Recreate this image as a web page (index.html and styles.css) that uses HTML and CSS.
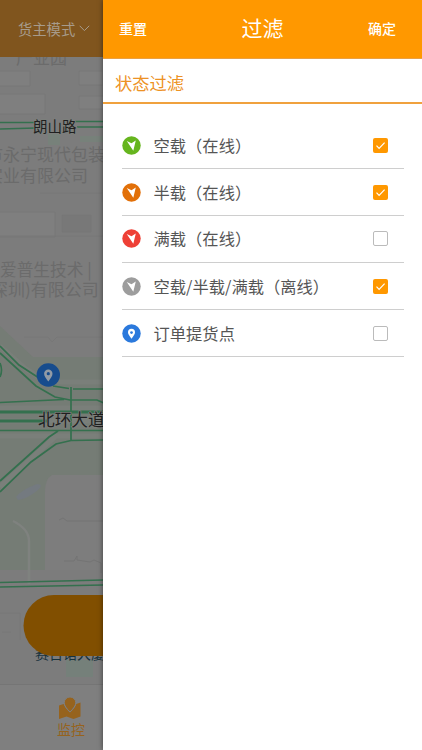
FILE: index.html
```
<!DOCTYPE html>
<html lang="zh-CN">
<head>
<meta charset="utf-8">
<title>过滤</title>
<link rel="stylesheet" href="styles.css">
</head>
<body>
<div class="screen">
  <section class="backdrop">
    <header class="mode">货主模式
      <svg width="11" height="7" viewBox="0 0 11 7"><path d="M.7.8l4.7 4.8L10.2.8" fill="none" stroke="#a79b8b"/></svg>
    </header>
    <svg class="map" width="104" height="627" viewBox="0 57 104 627">
      <rect y="57" width="104" height="627" fill="#7c7c7c"/>
      <g fill="#7f7f7f" stroke="#767676" stroke-width=".8">
        <path d="M-2 71H30V86H-2zM-2 94H45V114H-2zM79 71h24v14H79zM79 96h25v13H79zM-2 212H55V237H-2z"/>
        <path d="M62 215h29v17H62z" fill="#787878"/>
        <path d="M40 193h62M102 190v12M24 337h24l4 5 5-5h46M0 236h104M-1 613H20V640M2 632h9" fill="none"/>
      </g>
      <path d="M48 134h12v11H48zM80 136h24v6H80z" fill="#77817a"/>
      <path d="M0 326L33 357H104V475H60Q47 476 45 492V570H0z" fill="#757c75"/>
      <path d="M52 475H104V570H45V492Q45 479 52 475z" fill="#7d7d7d"/>
      <path d="M0 346L26 369 47 382H104M0 408H104M0 421H104M0 436H104M0 487L55 437" fill="none" stroke="#7a7f7a" stroke-width="5"/>
      <path d="M16 497Q21 490 37 484Q44 484 38 490Q27 499 18 500z" fill="#747a80"/>
      <path d="M13 521Q29 529 29 541V584" fill="none" stroke="#7f827f" stroke-width="2.500"/>
      <g fill="none" stroke="#747474"><path d="M59 520l4-2 4 3h36M64 561h10l3-5v4l13 2 4-2 7 3v10"/></g>
      <g fill="none" stroke="#34704e" stroke-width="1.700">
        <path d="M0 122.500h36M0 129l36-1M75 121.500h29M77 127h27"/>
        <path d="M0 346L19 365 39 378M0 353L36 386 55 397 70 400H97L104 403M53 386L69 388.500M73 389H104M0 402.500L64 399.500M0 430.500H104M0 481L49 437 58 431M0 492L31 462 56 444 71 440.500 104 440M71 387V440M0 363Q3 370 0 377"/>
        <path d="M0 412H104M0 421H47" stroke-width="3"/>
        <path d="M0 582.500L104 580M0 587L104 585"/>
      </g>
      <g class="map-faint">
        <text x="16" y="64" font-size="17">产业园</text>
        <text x="-14" y="161" font-size="17">市永宁现代包装</text>
        <text x="-14" y="182" font-size="17">实业有限公司</text>
        <text x="0" y="276" font-size="16.700">爱普生技术 |</text>
        <text x="-9" y="296" font-size="17">深圳)有限公司</text>
      </g>
      <g class="map-label">
        <text x="33" y="131.500" font-size="14.500">朗山路</text>
        <text x="38" y="425.500" font-size="16.700">北环大道</text>
      </g>
      <path d="M66 660h27v17H66z" fill="#75807a"/>
      <text class="landmark" x="35" y="659" font-size="14">赛百诺大厦</text>
      <circle cx="48.300" cy="375" r="11.700" fill="#174c8d"/>
      <path d="M48.300 381.500c-2.400-3.400-4.200-5.400-4.200-7.800a4.200 4.200 0 0 1 8.400 0c0 2.400-1.800 4.400-4.200 7.800z" fill="#929ba5"/><circle cx="48.300" cy="373.700" r="1.600" fill="#174c8d"/>
      <path d="M104 595H54a30.300 30.300 0 0 0 0 61H104z" fill="#814f00"/>
    </svg>
    <footer class="tab">
      <svg width="22" height="22" viewBox="0 0 22 22"><path d="M0 8.500L4.600 7Q6 11 11 15.500 16 11 17.300 7L21.500 5.500V19.500L14.500 22 7.500 19.500 0 22z" fill="#96631e"/><path d="M11 15C7.500 11.500 5.200 8.500 5.200 5.800a5.800 5.800 0 0 1 11.600 0C16.800 8.500 14.500 11.500 11 15z" fill="#96631e" stroke="#7f7f7f" stroke-width="1"/></svg>
      <span>监控</span>
    </footer>
  </section>
  <main class="drawer">
    <header class="drawer-head"><span>重置</span><h1>过滤</h1><span>确定</span></header>
    <h2>状态过滤</h2>
    <ul>
      <li><svg class="marker" viewBox="0 0 20 20"><circle cx="10" cy="10" r="9.700" fill="#66b51e"/><path d="M5 5.300l5 2.400L14.500 4.700l-2.600 10.800z" fill="#fff"/></svg><span>空载（在线）</span><i class="check on"><svg viewBox="0 0 15 15"><path d="M3.500 7.700l2.600 2.700 5.500-5.700"/></svg></i></li>
      <li><svg class="marker" viewBox="0 0 20 20"><circle cx="10" cy="10" r="9.700" fill="#e27009"/><path d="M5 5.300l5 2.400L14.500 4.700l-2.600 10.800z" fill="#fff"/></svg><span>半载（在线）</span><i class="check on"><svg viewBox="0 0 15 15"><path d="M3.500 7.700l2.600 2.700 5.500-5.700"/></svg></i></li>
      <li class="raised"><svg class="marker" viewBox="0 0 20 20"><circle cx="10" cy="10" r="9.700" fill="#ee4036"/><path d="M5 5.300l5 2.400L14.500 4.700l-2.600 10.800z" fill="#fff"/></svg><span>满载（在线）</span><i class="check"></i></li>
      <li><svg class="marker" viewBox="0 0 20 20"><circle cx="10" cy="10" r="9.700" fill="#9d9d9d"/><path d="M5 5.300l5 2.400L14.500 4.700l-2.600 10.800z" fill="#fff"/></svg><span>空载/半载/满载（离线）</span><i class="check on"><svg viewBox="0 0 15 15"><path d="M3.500 7.700l2.600 2.700 5.500-5.700"/></svg></i></li>
      <li><svg class="marker" viewBox="0 0 20 20"><circle cx="10" cy="10" r="9.700" fill="#2b79dc"/><path d="M10 15.500c-2.200-3-3.700-4.700-3.700-6.700a3.700 3.700 0 0 1 7.400 0c0 2-1.500 3.700-3.700 6.700z" fill="#fff"/><circle cx="10" cy="9" r="1.400" fill="#2b79dc"/></svg><span>订单提货点</span><i class="check"></i></li>
    </ul>
  </main>
</div>
</body>
</html>
```
FILE: styles.css
```
* { box-sizing: border-box; }
body { margin: 0; font-family: "Noto Sans CJK SC", sans-serif; }
svg { display: block; flex: none; }
.screen { display: flex; width: 422px; height: 750px; overflow: hidden; background: #fff; }
.backdrop { width: 103px; flex: none; display: flex; flex-direction: column; overflow: hidden; background: #7f7f7f; }
.mode { height: 57px; flex: none; padding: 0 0 1px 18px; display: flex; align-items: center; gap: 4px; background: #80551e; color: #a79b8b; font-size: 14.3px; white-space: nowrap; }
.map { flex: none; }
.map-faint { fill: #6b6b6b; }
.map-label { fill: #202020; stroke: #7d807d; stroke-width: 1.5px; paint-order: stroke; }
.landmark { fill: #17323d; }
.tab { flex: 1; padding: 12px 0 0 57px; border-top: 1px solid #757575; color: #96631e; font-size: 14px; line-height: 20px; }
.tab svg { margin-left: 2px; }
.tab span { display: block; }
.drawer { flex: 1; background: #fff; box-shadow: 0 0 5px rgba(0,0,0,.5); z-index: 1; }
.drawer-head { height: 59px; padding: 0 26px 2px 16px; display: flex; align-items: center; justify-content: space-between; background: #ff9800; color: #fff; font-size: 14px; border-bottom: 1px solid #e9a044; }
.drawer-head span { font-weight: 500; }
h1 { margin: 0 0 2px 10px; font-size: 21px; font-weight: 400; }
h2 { margin: 0; height: 45px; padding-left: 12px; border-bottom: 2px solid #f0a13d; color: #ed9225; font-size: 17.3px; line-height: 48px; font-weight: 400; }
ul { list-style: none; margin: 18px 18px 0 19px; padding: 0; }
li { height: 47px; padding-top: 1px; display: flex; align-items: center; border-bottom: 1px solid #cecece; color: #555; font-size: 16.3px; }
li span { margin-bottom: 2px; }
.raised { padding: 0 0 1px; }
.marker { width: 19px; height: 19px; margin-right: 12.5px; }
.check { margin-left: auto; margin-right: 16.5px; width: 15px; height: 15px; border: 1px solid #bbb; border-radius: 2px; }
.check.on { border: 0; background: #ff9800; }
.check path { fill: none; stroke: #fff; stroke-width: 1.2; }
```
